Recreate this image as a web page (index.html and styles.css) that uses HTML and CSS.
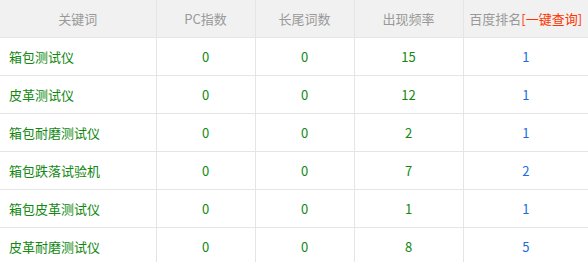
FILE: index.html
```html
<!DOCTYPE html>
<html lang="zh">
<head>
<meta charset="utf-8">
<link rel="stylesheet" href="styles.css">
</head>
<body>
<table class="kw-table">
  <colgroup>
    <col class="c1"><col class="c2"><col class="c3"><col class="c4"><col class="c5">
  </colgroup>
  <thead>
    <tr>
      <th>关键词</th>
      <th>PC指数</th>
      <th>长尾词数</th>
      <th>出现频率</th>
      <th>百度排名<span class="query">[一键查询]</span></th>
    </tr>
  </thead>
  <tbody>
    <tr><td class="kw">箱包测试仪</td><td class="num">0</td><td class="num">0</td><td class="num">15</td><td class="rank">1</td></tr>
    <tr><td class="kw">皮革测试仪</td><td class="num">0</td><td class="num">0</td><td class="num">12</td><td class="rank">1</td></tr>
    <tr><td class="kw">箱包耐磨测试仪</td><td class="num">0</td><td class="num">0</td><td class="num">2</td><td class="rank">1</td></tr>
    <tr><td class="kw">箱包跌落试验机</td><td class="num">0</td><td class="num">0</td><td class="num">7</td><td class="rank">2</td></tr>
    <tr><td class="kw">箱包皮革测试仪</td><td class="num">0</td><td class="num">0</td><td class="num">1</td><td class="rank">1</td></tr>
    <tr><td class="kw">皮革耐磨测试仪</td><td class="num">0</td><td class="num">0</td><td class="num">8</td><td class="rank">5</td></tr>
  </tbody>
</table>
</body>
</html>
```
FILE: styles.css
```css
html, body {
  margin: 0;
  padding: 0;
  background: #fff;
}
body {
  font-family: "Microsoft YaHei", "Noto Sans CJK SC", sans-serif;
  font-size: 13px;
}
.kw-table {
  width: 588px;
  border-collapse: collapse;
  table-layout: fixed;
}
.c1 { width: 156px; }
.c2 { width: 99px; }
.c3 { width: 99px; }
.c4 { width: 109px; }
.c5 { width: 125px; }
.kw-table th,
.kw-table td {
  border: 1px solid #e5e5e5;
  border-top: none;
  height: 37px;
  padding: 0;
  text-align: center;
  line-height: 20px;
  white-space: nowrap;
}
.kw-table th:first-child,
.kw-table td:first-child { border-left: none; }
.kw-table th:last-child,
.kw-table td:last-child { border-right: none; }
.kw-table th {
  background: #f1f1f1;
  color: #999;
  font-weight: normal;
  height: 37px;
}
.query { color: #ff3300; }
.kw-table td.kw {
  text-align: left;
  padding-left: 9px;
  color: #118811;
}
.num { color: #118811; }
.rank { color: #1a6fd8; }
```
